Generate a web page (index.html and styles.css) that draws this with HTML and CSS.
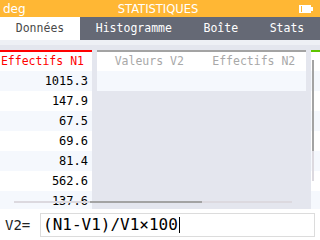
FILE: index.html
```html
<!DOCTYPE html>
<html lang="fr">
<head>
<meta charset="utf-8">
<title>Statistiques</title>
<link rel="stylesheet" href="styles.css">
</head>
<body>
<div class="screen">
  <header class="topbar">
    <span class="mode">deg</span>
    <span class="title">STATISTIQUES</span>
    <span class="battery">
      <svg width="14" height="8" viewBox="0 0 14 8">
        <rect x="0" y="0" width="12" height="8" fill="#fff"/>
        <rect x="2" y="1" width="1" height="6" fill="#ffb734"/>
        <rect x="12" y="2" width="2" height="4" fill="#fff"/>
      </svg>
    </span>
  </header>
  <nav class="tabs">
    <div class="tab active">Données</div>
    <div class="tab">Histogramme</div>
    <div class="tab">Boîte</div>
    <div class="tab">Stats</div>
  </nav>
  <main class="data">
    <div class="strip">
      <div class="series red cols1">
        <div class="head">Effectifs N1</div>
        <div class="cell">1015.3</div>
        <div class="cell">147.9</div>
        <div class="cell">67.5</div>
        <div class="cell">69.6</div>
        <div class="cell">81.4</div>
        <div class="cell">562.6</div>
        <div class="cell">137.6</div>
      </div>
      <div class="series grey cols2">
        <div class="head">Valeurs V2</div>
        <div class="head">Effectifs N2</div>
        <div class="cell"></div>
        <div class="cell"></div>
      </div>
      <div class="series green cols1">
        <div class="head"></div>
        <div class="cell"></div>
        <div class="cell"></div>
        <div class="cell"></div>
        <div class="cell"></div>
        <div class="cell"></div>
        <div class="cell"></div>
        <div class="cell"></div>
      </div>
    </div>
    <div class="vscroll"><div class="thumb"></div></div>
    <div class="hscroll"><div class="thumb"></div></div>
  </main>
  <footer class="input">
    <span class="label">V2=</span>
    <div class="field">(N1-V1)/V1×100<span class="cursor"></span></div>
  </footer>
</div>
</body>
</html>
```
FILE: styles.css
```css
* { box-sizing: border-box; }
html, body { margin: 0; padding: 0; }
body { width: 320px; height: 240px; overflow: hidden; background: #fff; }
.screen { width: 320px; height: 240px; display: flex; flex-direction: column; }

.topbar {
  height: 17px;
  background: #ffb734;
  color: #fff;
  display: grid;
  grid-template-columns: 1fr auto 1fr;
  align-items: center;
  padding: 0 7px 0 3px;
  font: 12px "DejaVu Sans", sans-serif;
}
.title { font-size: 11.5px; }
.battery { justify-self: end; display: flex; }

.tabs {
  height: 23px;
  background: #656975;
  display: flex;
}
.tab {
  flex: 1 1 auto;
  text-align: center;
  color: #fff;
  font: 11.5px/23px "DejaVu Sans Mono", monospace;
}
.tab.active { background: #fff; color: #4a4a4a; }

.data {
  position: relative;
  height: 169px;
  background: #e4e6ee;
  border-top: 5px solid #eef0f5;
  padding-top: 5px;
  overflow: hidden;
}
.strip {
  display: flex;
  align-items: flex-start;
  gap: 5px;
  margin-left: -13px;
}
.series {
  display: grid;
  border-top: 2px solid #a3a3a3;
  font: 12px "DejaVu Sans Mono", monospace;
}
.cols1 { grid-template-columns: 105px; }
.cols2 { grid-template-columns: 104.5px 104.5px; }
.series.red { border-top-color: #ff0000; }
.series.grey { border-top-color: #a3a3a3; }
.series.green { border-top-color: #5ec400; }
.head {
  height: 19px;
  line-height: 19px;
  font-size: 11.5px;
  text-align: center;
  background: #fff;
  color: #a8a8a8;
  white-space: nowrap;
}
.red .head { color: #ff0000; text-align: right; padding-right: 8px; }
.cell {
  height: 20px;
  line-height: 20px;
  text-align: right;
  padding-right: 4px;
  color: #000;
  background: #fff;
}
.cols1 .cell:nth-child(even) { background: #f5f8fd; }
.cols2 .cell:nth-child(n+3):nth-child(-n+4) { background: #f5f8fd; }

.vscroll {
  position: absolute;
  left: 312px;
  top: 15px;
  width: 2px;
  height: 121px;
  background: #dcd9df;
}
.vscroll .thumb { height: 91px; background: #a3a3a3; }
.hscroll {
  position: absolute;
  left: 14px;
  top: 156px;
  width: 278px;
  height: 2px;
  background: #dcd9df;
}
.hscroll .thumb { margin-left: 76px; width: 112px; height: 2px; background: #a3a3a3; }

.input {
  height: 31px;
  background: #fff;
  display: flex;
  align-items: center;
  padding: 0 5px;
}
.label {
  width: 35px;
  font: 14px "DejaVu Sans Mono", monospace;
  color: #222;
}
.field {
  flex: 1;
  height: 24px;
  border: 1px solid #dcdcdc;
  display: flex;
  align-items: center;
  padding-left: 2px;
  font: 16px "DejaVu Sans Mono", monospace;
  color: #000;
}
.cursor { width: 1px; height: 16px; background: #000; margin-left: 1px; }
```
